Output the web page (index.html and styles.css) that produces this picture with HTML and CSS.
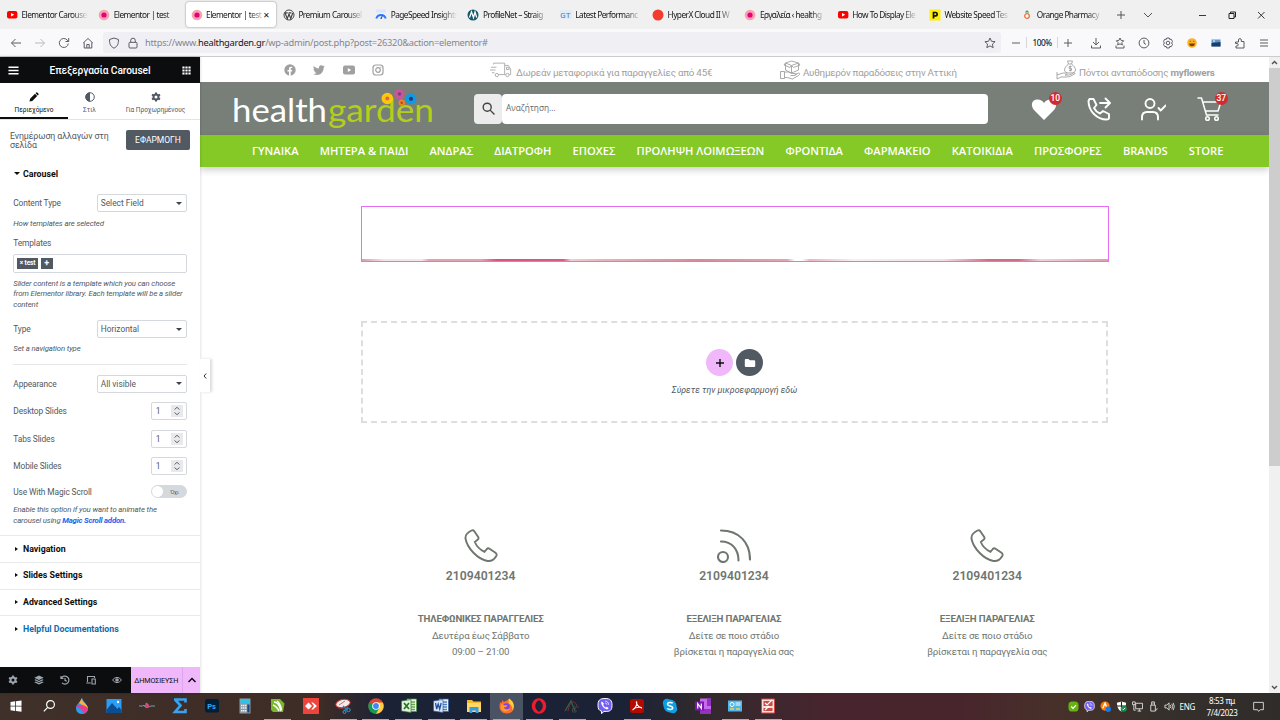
FILE: index.html
```
<!DOCTYPE html>
<html lang="el">

<head>
    <meta charset="UTF-8">
    <meta name="viewport" content="width=device-width, initial-scale=1.0">
    <title>Elementor | test</title>
    <link rel="stylesheet" href="styles.css">
</head>

<body>
    <!-- shared icons -->
    <svg class="defs">
        <symbol id="yt" viewBox="0 0 12 12"><rect x="1" y="2" width="10.4" height="7.6" rx="2" fill="#f00"/><path d="M5 4l3.2 1.8L5 7.6z" fill="#fff"/></symbol>
        <symbol id="el" viewBox="0 0 12 12"><circle cx="6" cy="6" r="5.3" fill="#f7a3ae"/><circle cx="6" cy="6" r="2.6" fill="#e5007e"/></symbol>
        <symbol id="phone" viewBox="0 0 34 34"><path d="M7.500 1.500C3.500 3.500 1 6 1.500 9.500C3 19 14 30.500 23.500 32C27.500 32.500 30.500 30 32.300 27C33 25.500 32.500 24.500 31.500 23.800L25.500 19.700C24.500 19 23.500 19.200 22.800 20L20.500 22.800C16.500 21 12.500 17 10.800 13L13.800 10.600C14.500 10 14.700 9 14.200 8L10.300 2.200C9.600 1.200 8.500 1 7.500 1.500Z" fill="none" stroke="#6f766f" stroke-width="1.900"/></symbol>
        <symbol id="viber" viewBox="0 0 16 16"><path d="M8 .5C2.500.5 1 2.500 1 7.300c0 3.700 1 5.200 3.500 5.800v2.600l2.500-2.300C13.300 13.700 15 12.500 15 7.300 15 2.500 13.500.5 8 .5z" fill="#7360f2" stroke="#fff" stroke-width="1"/><path d="M5 3.500c-1 .5-1 1.500-.5 2.700 1 2.400 2.800 4.300 5 5 1 .2 1.700-.3 2-1.200L9.700 8.700l-.9.8C7.500 9 6.700 8 6.200 6.700l.8-.9z" fill="#fff"/><path d="M8.200 3.200c2 0 3.300 1.300 3.400 3.500M8.300 5c1 .1 1.500.7 1.600 1.600" fill="none" stroke="#fff" stroke-width=".8"/></symbol>
    </svg>

    <!-- browser tabs -->
    <div class="tabbar">
        <div class="tab"><svg><use href="#yt"/></svg><span>Elementor Carousel</span></div>
        <div class="tab"><svg><use href="#el"/></svg><span>Elementor | test</span></div>
        <div class="tab active"><svg><use href="#el"/></svg><span>Elementor | test</span><i>✕</i></div>
        <div class="tab"><svg viewBox="0 0 12 12"><circle cx="6" cy="6" r="5" fill="#fff" stroke="#464342"/><path d="M2 3.800l2.300 6L6 5l1.800 4.800L9.700 4M1.800 3.800h3M5.500 3.800h3" fill="none" stroke="#464342" stroke-width="1.200"/></svg><span>Premium Carousel</span></div>
        <div class="tab"><svg viewBox="0 0 12 12"><path d="M1 .5h10v3H1z" fill="#d6e6ff"/><path d="M1.300 9.500a4.900 4.900 0 019.400 0" fill="none" stroke="#2979ff" stroke-width="2"/><path d="M5 9.500L8 5.500 6.800 10z" fill="#1a56c9"/></svg><span>PageSpeed Insights</span></div>
        <div class="tab"><svg viewBox="0 0 12 12"><circle cx="6" cy="6" r="5.500" fill="#15576b"/><path d="M2.500 8.500L4.500 3l2 5.500L8 3l1.700 5.500" fill="none" stroke="#fff" stroke-width="1.300"/></svg><span>ProfileNet – Straig</span></div>
        <div class="tab"><svg viewBox="0 0 12 12"><path d="M0 1h12v9H0z" fill="#e3ecf5"/><text x="0.300" y="8.500" class="gt">GT</text></svg><span>Latest Performanc</span></div>
        <div class="tab"><svg viewBox="0 0 12 12"><circle cx="6" cy="6" r="5.500" fill="#f23c2e"/></svg><span>HyperX Cloud II W</span></div>
        <div class="tab"><svg><use href="#el"/></svg><span>Εργαλεία ‹ healthg</span></div>
        <div class="tab"><svg><use href="#yt"/></svg><span>How To Display Ele</span></div>
        <div class="tab"><svg viewBox="0 0 12 12"><path d="M.5.500h11v11H.5z" fill="#ffef00"/><path d="M4.500 9.500V3.500h2a1.500 1.500 0 010 3.300h-2" fill="none" stroke="#111" stroke-width="1.700"/></svg><span>Website Speed Tes</span></div>
        <div class="tab"><svg viewBox="0 0 12 12"><circle cx="6" cy="7" r="2.300" fill="#fff" stroke="#f0703a" stroke-width="1.300"/><path d="M4.500 3.500L6 2l1.500 1.500" fill="none" stroke="#3d9a5b" stroke-width="1.200"/></svg><span>Orange Pharmacy</span></div>
        <div class="tab-tools">
            <svg viewBox="0 0 40 12"><path d="M6 2v8M2 6h8M29 4l4 4 4-4" fill="none" stroke="#55555d"/></svg>
        </div>
        <div class="win">
            <svg viewBox="0 0 70 12"><path d="M1 6.500h7M60 3l6.500 6.500M66.500 3L60 9.500" fill="none" stroke="#222" stroke-width=".9"/><path d="M31 4.500h5v5h-5zM32.500 4.500V3h5v5h-1.500" fill="none" stroke="#222"/></svg>
        </div>
    </div>

    <!-- address bar -->
    <div class="toolbar">
        <div class="nav-btns">
            <svg viewBox="0 0 12 12"><path d="M11 6H1.500M5.500 2L1.500 6l4 4" /></svg>
            <svg viewBox="0 0 12 12" class="off"><path d="M1 6h9.500M6.500 2l4 4-4 4"/></svg>
            <svg viewBox="0 0 12 12"><path d="M10.300 6.500a4.500 4.500 0 11-1.200-3.600L10.500 4.300M10.700 1v3.500H7.500"/></svg>
            <svg viewBox="0 0 12 12"><path d="M1.200 6L6 1.500 10.800 6M2.200 5.500V11h7.600V5.500M4.800 11V7.500h2.400V11"/></svg>
        </div>
        <div class="url">
            <svg viewBox="0 0 12 12"><path d="M6 1l4.500 1.500C10.500 7 9.500 9.500 6 11.200 2.500 9.500 1.500 7 1.500 2.500z"/></svg>
            <svg viewBox="0 0 12 12"><rect x="2" y="5.300" width="8" height="5.700" rx="1"/><path d="M3.700 5.300V3.500a2.300 2.300 0 014.600 0v1.800"/></svg>
            <p>https://www.<b>healthgarden.gr</b>/wp-admin/post.php?post=26320&amp;action=elementor#</p>
            <svg viewBox="0 0 12 12" class="star"><path d="M6 1l1.500 3.300 3.600.4L8.400 7.100l.8 3.600L6 8.900l-3.200 1.800.8-3.600L.9 4.700l3.600-.4z"/></svg>
        </div>
        <div class="zoom"><svg viewBox="0 0 12 12"><path d="M2 6h8"/></svg><em>100%</em><svg viewBox="0 0 12 12"><path d="M2 6h8M6 2v8"/></svg></div>
        <div class="ext">
            <svg viewBox="0 0 12 12"><path d="M6 1v7M3 5l3 3 3-3M1.500 8.500V11h9V8.500"/></svg>
            <svg viewBox="0 0 12 12"><path d="M6 1l1.200 2.500 2.500.3-1.800 1.800.4 2.400L6 6.800 3.700 8l.4-2.400L2.300 3.800l2.500-.3zM2 8.500V11h8V8.500"/></svg>
            <svg viewBox="0 0 12 12"><circle cx="6" cy="6" r="4.900"/><path d="M6 3v3.200l2 1.300"/></svg>
            <svg viewBox="0 0 12 12"><circle cx="6" cy="6" r="1.800"/><path d="M4.800 1h2.400l.5 1.400 1.500-.2 1.300 2.200L9.600 6l.9 1.500-1.300 2.200-1.500-.2L7.200 11H4.800l-.5-1.500-1.500.2-1.300-2.200L2.400 6l-.9-1.600 1.300-2.200 1.500.2z"/></svg>
            <svg viewBox="0 0 12 12"><circle cx="6" cy="6" r="4.800" fill="#fbb21e" stroke="none"/><path d="M3.200 6.500h5.600a2.800 2.800 0 01-5.600 0z" fill="#7b3b17" stroke="none"/><path d="M4.300 3.800v1M7.700 3.800v1"/></svg>
            <svg viewBox="0 0 12 12"><path d="M1.500 2.500h9v7h-9z" fill="#5b97d3" stroke="none"/><path d="M1.500 6l9-1v4.500h-9z" fill="#203a61" stroke="none"/><path d="M3 4h2" stroke="#fff"/></svg>
            <svg viewBox="0 0 12 12"><path d="M1.500 5h3V3a1.400 1.400 0 012.800 0v1.500H10V11H2V9h1a1.200 1.200 0 000-2.500H1.500z"/></svg>
            <svg viewBox="0 0 12 12"><path d="M2 3h8M2 6h8M2 9h8"/></svg>
        </div>
    </div>

    <div class="app">
        <!-- elementor panel -->
        <div class="panel">
            <div class="panel-head">
                <svg viewBox="0 0 12 12"><path d="M.5 2.500h11M.5 6h11M.5 9.500h11" stroke="#fff" stroke-width="1.600"/></svg>
                <h1>Επεξεργασία Carousel</h1>
                <svg viewBox="0 0 12 12"><path d="M1.500 2.700h9M1.500 6h9M1.500 9.300h9" stroke="#fff" stroke-width="2.300" stroke-dasharray="2.400 .9"/></svg>
            </div>
            <div class="panel-tabs">
                <div class="ptab on">
                    <svg viewBox="0 0 10 10"><path d="M.5 9.500l.6-2.800L6 1.800l2.200 2.200L3.300 9zM6.600 1.200l.7-.7q.5-.4 1 0l1.200 1.200q.4.500 0 1l-.7.700z" fill="#0c0d0e"/></svg>
                    <span>Περιεχόμενο</span>
                </div>
                <div class="ptab">
                    <svg viewBox="0 0 10 10"><circle cx="5" cy="5" r="4.300" fill="none" stroke="#515962"/><path d="M5 .5a4.500 4.500 0 000 9z" fill="#515962"/></svg>
                    <span>Στιλ</span>
                </div>
                <div class="ptab wide">
                    <svg viewBox="0 0 10 10"><circle cx="5" cy="5" r="2.500" fill="none" stroke="#515962" stroke-width="2"/><path d="M5 .4v2M5 7.600v2M1 2.700l1.700 1M7.300 6.300l1.700 1M1 7.300l1.700-1M7.300 3.700l1.700-1" stroke="#515962" stroke-width="2"/></svg>
                    <span>Για Προχωρημένους</span>
                </div>
            </div>
            <div class="notice">
                <p>Ενημέρωση αλλαγών στη σελίδα</p>
                <button>ΕΦΑΡΜΟΓΗ</button>
            </div>
            <h2 class="section open">Carousel</h2>
            <div class="controls">
                <div class="row first"><label>Content Type</label><div class="select">Select Field</div></div>
                <p class="desc">How templates are selected</p>
                <label class="lbl">Templates</label>
                <div class="tags"><span>× test</span><span class="plus">+</span></div>
                <p class="desc tpl">Slider content is a template which you can choose<br>from Elementor library. Each template will be a slider<br>content</p>
                <div class="row type"><label>Type</label><div class="select">Horizontal</div></div>
                <p class="desc">Set a navigation type</p>
                <hr>
                <div class="row"><label>Appearance</label><div class="select">All visible</div></div>
                <div class="row"><label>Desktop Slides</label><div class="num">1<svg viewBox="0 0 12 12"><path d="M3.500 4.500L6 2.300l2.500 2.200M3.500 7.500L6 9.700l2.500-2.200"/></svg></div></div>
                <div class="row"><label>Tabs Slides</label><div class="num">1<svg viewBox="0 0 12 12"><path d="M3.500 4.500L6 2.300l2.500 2.200M3.500 7.500L6 9.700l2.500-2.200"/></svg></div></div>
                <div class="row"><label>Mobile Slides</label><div class="num">1<svg viewBox="0 0 12 12"><path d="M3.500 4.500L6 2.300l2.500 2.200M3.500 7.500L6 9.700l2.500-2.200"/></svg></div></div>
                <div class="row magic"><label>Use With Magic Scroll</label><div class="switch"><b></b>Όχι</div></div>
                <p class="desc end">Enable this option if you want to animate the<br>carousel using <a>Magic Scroll addon.</a></p>
            </div>
            <h2 class="section">Navigation</h2>
            <h2 class="section">Slides Settings</h2>
            <h2 class="section">Advanced Settings</h2>
            <h2 class="section help">Helpful Documentations</h2>
            <div class="panel-foot">
                <svg viewBox="0 0 10 10"><circle cx="5" cy="5" r="2.500" fill="none" stroke="#9da5ae" stroke-width="2"/><path d="M5 .4v2M5 7.600v2M1 2.700l1.700 1M7.300 6.300l1.700 1M1 7.300l1.700-1M7.300 3.700l1.700-1" stroke="#9da5ae" stroke-width="1.800"/></svg>
                <svg viewBox="0 0 10 10"><path d="M5 .5l4.700 2.200L5 5 .3 2.700zM.3 5l1.400-.7L5 5.900l3.300-1.600 1.400.7L5 7.300zM.3 7.200l1.400-.7L5 8.100l3.300-1.600 1.400.7L5 9.500z" fill="#9da5ae"/></svg>
                <svg viewBox="0 0 10 10"><path d="M1 1v2.500h2.500M1.300 3.300A4 4 0 112 7.800M5 3v2.300l1.700 1" fill="none" stroke="#9da5ae" stroke-width="1.200"/></svg>
                <svg viewBox="0 0 10 10"><path d="M1.500 7V1.500h7V3M.3 8h4.500M6 4h3.300v5H6z" fill="none" stroke="#9da5ae" stroke-width="1.100"/></svg>
                <svg viewBox="0 0 10 10"><path d="M.5 5Q5-.3 9.500 5 5 10.300.5 5z" fill="none" stroke="#9da5ae"/><circle cx="5" cy="5" r="1.800" fill="#9da5ae"/></svg>
                <span class="publish">ΔΗΜΟΣΙΕΥΣΗ</span>
                <span class="up"><svg viewBox="0 0 10 10"><path d="M1.500 7L5 3.500 8.500 7" fill="none" stroke="#0c0d0e" stroke-width="1.500"/></svg></span>
            </div>
            <div class="collapse"><svg viewBox="0 0 6 8"><path d="M4.200 1.500L2 4l2.200 2.500" fill="none" stroke="#333"/></svg></div>
        </div>

        <!-- site preview -->
        <div class="site">
            <div class="top">
                <div class="social">
                    <svg viewBox="0 0 12 12"><circle cx="6" cy="6" r="5.700" fill="#a0a0a0"/><path d="M5 12V7.500H3.500V6H5V4.700C5 3.200 6 2.500 8.200 2.800V4C7 4 6.700 4.200 6.700 5v1H8.200L8 7.500H6.700V12z" fill="#fff"/></svg>
                    <svg viewBox="0 0 12 12"><path d="M11.800 2.500l-1.200 1.300C10.600 8.500 7.500 11 4 11 2.500 11 1.200 10.600.2 10c1.300.1 2.500-.2 3.400-1-1 0-1.900-.7-2.200-1.700h1C1.200 7 .5 6 .5 4.900l1 .3C.5 4.300.2 3 .8 1.900 2.100 3.400 3.800 4.300 5.900 4.500 5.500 2.500 6.700 1.200 8.300 1.200c.7 0 1.300.3 1.800.8l1.500-.6-1 1.300z" fill="#a0a0a0"/></svg>
                    <svg viewBox="0 0 12 12"><rect y="1.600" width="12" height="8.800" rx="2" fill="#a0a0a0"/><path d="M4.800 4l3.400 2-3.400 2z" fill="#fff"/></svg>
                    <svg viewBox="0 0 12 12" fill="none" stroke="#a0a0a0" stroke-width="1.200"><rect x="1" y="1" width="10" height="10" rx="2.700"/><circle cx="6" cy="6" r="2.300"/><path d="M8.500 3.300h.8"/></svg>
                </div>
                <div class="info one">
                    <svg viewBox="0 0 24 18"><path d="M4 3V1.500h12V14H9.500M16 4h4l2.500 4v6h-1.500M16 14h1M18 6h2l1 2.500h-3zM1 6h6M0 9h6M2 12h3"/><circle cx="7.500" cy="14.500" r="1.800"/><circle cx="19" cy="14.500" r="1.800"/></svg>
                    <span>Δωρεάν μεταφορικά για παραγγελίες από 45€</span>
                </div>
                <div class="info two">
                    <svg viewBox="0 0 21 20"><path d="M12 1l7 2v7l-7 3-6-3V3zM6 3l6 2.500L19 3M12 5.500V13M6 3L4.500 5l6 2.500L12 5.500l2 2L20.500 5 19 3M5 12h4l3 1.500h4c1 0 1 2-1 2h-4M15 15l4-2c1.500 0 1.500 1.500 0 2.500L13 19 8 17.500H5M1 11.500h4v7H1z"/></svg>
                    <span>Αυθημερόν παραδόσεις στην Αττική</span>
                </div>
                <div class="info three">
                    <svg viewBox="0 0 20 20"><path d="M11.500 1h5l-1 3h-3zM12.500 4C10 6 8.500 8 8.500 10s2 3 5.500 3 5.500-1 5.500-3S18 6 15.500 4M15.700 6.500h-2.500v2h2.300v2H13M14.300 5.500v6M1 12v7l4-2h5c3 0 6-1 9-3.500 0-1-1.500-1-2 0l-4 1.500H9c2 0 3-1.700 1.500-2H7L1 15"/></svg>
                    <span>Πόντοι ανταπόδοσης <b>myflowers</b></span>
                </div>
            </div>
            <div class="head">
                <svg class="logo" viewBox="0 0 204 44">
                    <text x="0" y="34" textLength="95" lengthAdjust="spacingAndGlyphs" fill="#fff">health</text>
                    <text x="96" y="34" textLength="106" lengthAdjust="spacingAndGlyphs" fill="#b3ce1b">garden</text>
                    <circle cx="155.300" cy="10.500" r="3.900" fill="#e9604e" stroke="#fdc70c" stroke-width="3.800"/>
                    <circle cx="167.500" cy="6" r="3.500" fill="#76407f" stroke="#cb5599" stroke-width="3.400"/>
                    <circle cx="179" cy="10.800" r="3.800" fill="#2b3580" stroke="#0c9ce3" stroke-width="3.400"/>
                    <circle cx="169.700" cy="14.700" r="2.200" fill="#a34c28" stroke="#f08224" stroke-width="2"/>
                </svg>
                <div class="search">
                    <div class="mag"><svg viewBox="0 0 12 12"><circle cx="4.800" cy="4.800" r="3.700"/><path d="M7.500 7.500l4 4"/></svg></div>
                    <div class="field">Αναζήτηση...</div>
                </div>
                <div class="actions">
                    <div class="act"><svg viewBox="0 0 26 26"><path d="M13 24L3 14C-1 9 1 3.500 6.500 3.500c3 0 5 1.500 6.500 3.500 1.500-2 3.500-3.500 6.500-3.500C25 3.500 27 9 23 14z" fill="#fff"/></svg><sup>10</sup></div>
                    <div class="act"><svg viewBox="0 0 26 26"><path d="M3.500 3h4l3 6-2.500 3c1.500 3 3.500 4.500 6 5.500l3-2.500 6 3v4c0 1.500-1 1.500-2.500 1.500C11 23.500 2.500 15 2.500 5zM14 7h9M19.500 2.500L24 7l-4.500 4.500" class="ln"/></svg></div>
                    <div class="act"><svg viewBox="0 0 26 26"><circle cx="10" cy="7.500" r="4.500" class="ln"/><path d="M2 23.500v-2c0-4 2-5.500 5-5.500h6c3 0 5 1.500 5 5.500v2M18.500 12l2.200 2.500 5-5" class="ln"/></svg></div>
                    <div class="act cart"><svg viewBox="0 0 26 26"><path d="M1 2h3.500L9.500 19H21M6 6h18l-3 9H8.500" class="ln"/><circle cx="10.500" cy="22.500" r="1.800" class="ln"/><circle cx="19.500" cy="22.500" r="1.800" class="ln"/></svg><sup>37</sup></div>
                </div>
            </div>
            <ul class="menu">
                <li>ΓΥΝΑΙΚΑ</li>
                <li>ΜΗΤΕΡΑ &amp; ΠΑΙΔΙ</li>
                <li>ΑΝΔΡΑΣ</li>
                <li>ΔΙΑΤΡΟΦΗ</li>
                <li>ΕΠΟΧΕΣ</li>
                <li>ΠΡΟΛΗΨΗ ΛΟΙΜΩΞΕΩΝ</li>
                <li>ΦΡΟΝΤΙΔΑ</li>
                <li>ΦΑΡΜΑΚΕΙΟ</li>
                <li>ΚΑΤΟΙΚΙΔΙΑ</li>
                <li>ΠΡΟΣΦΟΡΕΣ</li>
                <li>BRANDS</li>
                <li>STORE</li>
            </ul>
            <div class="widget"><div class="strip"></div></div>
            <div class="drop">
                <div class="btns">
                    <div class="round add"><svg viewBox="0 0 10 10"><path d="M5 1v8M1 5h8" stroke="#0c0d0e" stroke-width="1.400"/></svg></div>
                    <div class="round"><svg viewBox="0 0 12 12"><path d="M.8 3q0-1 1-1h2.700l1.300 1.300h4.400q1 0 1 1V9q0 1-1 1H1.800q-1 0-1-1z" fill="#fff"/></svg></div>
                </div>
                <p>Σύρετε την μικροεφαρμογή εδώ</p>
            </div>
            <div class="cols">
                <div class="col">
                    <svg><use href="#phone"/></svg>
                    <h3>2109401234</h3>
                    <p><b>ΤΗΛΕΦΩΝΙΚΕΣ ΠΑΡΑΓΓΕΛΙΕΣ</b><br>Δευτέρα έως Σάββατο<br>09:00 – 21:00</p>
                </div>
                <div class="col">
                    <svg viewBox="0 0 34 34"><g fill="none" stroke="#6f766f" stroke-width="2.100" stroke-linecap="round"><circle cx="6" cy="28" r="5"/><path d="M4 12.500c11 0 17.500 8 17.500 19M4 1.500c18 0 29 12 29 29"/></g></svg>
                    <h3>2109401234</h3>
                    <p><b>ΕΞΕΛΙΞΗ ΠΑΡΑΓΕΛΙΑΣ</b><br>Δείτε σε ποιο στάδιο<br>βρίσκεται η παραγγελία σας</p>
                </div>
                <div class="col">
                    <svg><use href="#phone"/></svg>
                    <h3>2109401234</h3>
                    <p><b>ΕΞΕΛΙΞΗ ΠΑΡΑΓΕΛΙΑΣ</b><br>Δείτε σε ποιο στάδιο<br>βρίσκεται η παραγγελία σας</p>
                </div>
            </div>
        </div>
        <div class="scroll">
            <svg viewBox="0 0 11 11"><path d="M3 7l2.500-2.500L8 7" fill="none" stroke="#505050" stroke-width="1.400"/></svg>
            <div class="thumb"></div>
            <svg viewBox="0 0 11 11"><path d="M3 4l2.500 2.500L8 4" fill="none" stroke="#505050" stroke-width="1.400"/></svg>
        </div>
    </div>

    <!-- windows taskbar -->
    <div class="taskbar">
        <div class="apps">
            <div><svg viewBox="0 0 16 16"><path d="M2.500 4l4.700-.7v4.400H2.500zM8 3.200l5.500-.8v5.300H8zM2.500 8.500h4.700v4.400l-4.700-.7zM8 8.500h5.500v5.300L8 13z" fill="#fff"/></svg></div>
            <div><svg viewBox="0 0 16 16"><circle cx="9.500" cy="6.500" r="3.900" fill="none" stroke="#fff" stroke-width="1.200"/><path d="M6.700 9.300L2.800 13.300" stroke="#fff" stroke-width="1.200"/></svg></div>
            <div><svg viewBox="0 0 16 16"><path d="M8 0C7 4 2 6 2 10.500a6 5.500 0 0012 0C14 7 10 5 8 0z" fill="#2d9cea"/><path d="M8 0c-.7 4 5.800 6 6 10.500L5 5z" fill="#fbb03b"/><path d="M3 7c3-1 8 0 11 3 0 3-2 5-4 5.500C9 12 6 10 2.500 9z" fill="#e43d8f"/></svg></div>
            <div><svg viewBox="0 0 16 16"><path d="M.5 1h15v14H.5z" fill="#2a9df4"/><path d="M.5 12L6 5l5.500 6L13 9l2.500 3v3H.5z" fill="#0b4d91"/><circle cx="12" cy="4" r="1.200" fill="#fff"/></svg></div>
            <div><svg viewBox="0 0 16 16"><path d="M0 8h4l1-1 1 2 2-2 2 2 2-1h4" fill="none" stroke="#6aa0a8"/><circle cx="8" cy="8" r="2.300" fill="#d8437f"/><path d="M6 6l2-1.500 1 2z" fill="#56a64b"/></svg></div>
            <div><svg viewBox="0 0 16 16"><path d="M2 1.500h11.500v3M3 1.500l5.500 6L3 14h10.500v-3" fill="none" stroke="#3aa2f2" stroke-width="2.600"/></svg></div>
            <div><svg viewBox="0 0 16 16"><rect x="1" y="1" width="14" height="13.500" rx="2.500" fill="#001e36"/><text x="3.200" y="10.700" class="ps">Ps</text></svg></div>
            <div><svg viewBox="0 0 16 16"><path d="M2.500.500h11v15h-11z" fill="#8d9ba5"/><path d="M3.500 1.500h9V5h-9z" fill="#30c3ea"/><path d="M4 7.500h5.500M4 10h5.500M4 12.700h5.500" stroke="#f0f0f0" stroke-width="1.600" stroke-dasharray="1.500 .5"/><path d="M10.300 6.500h2.200v8h-2.200z" fill="#174a83"/></svg></div>
            <div class="run"><svg viewBox="0 0 16 16"><path d="M1 1h9l4.500 4.500L13 14H3L1 12z" fill="#78b82a"/><path d="M4 4c4 0 6 5 7 9M3 7c3 1 5 4 6 6M7 3c3 2 4 6 4.500 9" fill="none" stroke="#fff" stroke-width="1.500"/></svg></div>
            <div><svg viewBox="0 0 16 16"><path d="M0 0h16v16H0z" fill="#ef443b"/><path d="M5.500 4.500L9 8l-3.500 3.500L2 8zM8.300 4.500L10 4.500 14 8l-4 3.500H8.300L11 8z" fill="#fff"/></svg></div>
            <div class="run"><svg viewBox="0 0 16 16"><ellipse cx="8" cy="5.500" rx="7.300" ry="4" fill="#eee" stroke="#c9332e" transform="rotate(-12 8 5.500)"/><path d="M4 7l6-4M3 10l6 1" stroke="#b33" stroke-width=".7"/><path d="M8 8l4 4M13 9l-4 4" stroke="#2c7bb8" stroke-width="1.200"/><circle cx="13.500" cy="12" r="1.700" fill="none" stroke="#2c9bd8"/><circle cx="9.500" cy="14" r="1.500" fill="none" stroke="#2c9bd8"/></svg></div>
            <div class="run"><svg viewBox="0 0 16 16"><circle cx="8" cy="8" r="7.700" fill="#db4437"/><path d="M1.300 4.200A7.700 7.700 0 008 15.700L11.400 10 8 8z" fill="#0f9d58"/><path d="M8 15.700A7.700 7.700 0 0014.800 4.400H8L11.400 10z" fill="#ffcd40"/><circle cx="8" cy="8" r="3.800" fill="#fff"/><circle cx="8" cy="8" r="2.900" fill="#4285f4"/></svg></div>
            <div class="run"><svg viewBox="0 0 16 16"><path d="M6 1h9.500v12.500H6z" fill="#eef5ea" stroke="#4b9a3d" stroke-width=".7"/><path d="M10 4h4M10 6.500h4M10 9h4M10 11.500h4" stroke="#66a74b" stroke-width="1.300"/><path d="M.5 3L10 1.500v13L.5 13z" fill="#e3f0dc" stroke="#2e7d32" stroke-width=".7"/><path d="M3 5l5 6M8 5l-5 6" stroke="#267326" stroke-width="1.700"/></svg></div>
            <div class="run"><svg viewBox="0 0 16 16"><path d="M6 1h9.500v12.500H6z" fill="#eef3fa" stroke="#2f5fa5" stroke-width=".7"/><path d="M10 4h4M10 6.500h4M10 9h4M10 11.500h4" stroke="#4d7fc0" stroke-width="1.300"/><path d="M.5 3L10 1.500v13L.5 13z" fill="#dde8f7" stroke="#2f5fa5" stroke-width=".7"/><path d="M2.500 5l1.200 6 1.500-5 1.500 5L8.200 5" fill="none" stroke="#204f9b" stroke-width="1.300"/></svg></div>
            <div class="run"><svg viewBox="0 0 16 16"><path d="M1 2h5l1.500 1.500H15V14H1z" fill="#f5b92e"/><path d="M1 5h14v9H1z" fill="#ffd868"/><path d="M3.500 9h9v6h-2.800v-2.500H6.300V15H3.500z" fill="#3d9be0"/></svg></div>
            <div class="run now"><svg viewBox="0 0 16 16"><path d="M3 2l2 2c1-1 2-1.500 3-1.500L10 .5l1.500 3L13 3c3 4 3 12-5 12.500C1 15.500-1 9 1.500 4L3 5z" fill="#ff6d2e"/><path d="M10 .5c5 3 6 8 3.500 12 0-3-1-6-4-7.500z" fill="#ffce3a"/><circle cx="7.500" cy="8.500" r="3.300" fill="#7f45d6"/><path d="M2 6l4 1.500L8.500 7 7 9.500 5 9C5 12 9 12 11 10c-1 4-6 5-9 1z" fill="#ff9a2e"/></svg></div>
            <div class="run"><svg viewBox="0 0 16 16"><ellipse cx="8" cy="8" rx="5.500" ry="6" fill="none" stroke="#ee1c2e" stroke-width="3.500"/><ellipse cx="8" cy="8" rx="3" ry="5.700" fill="#1e2336"/></svg></div>
            <div class="run"><svg viewBox="0 0 16 16"><path d="M1 13L7 3l4 10" fill="none" stroke="#35633f" stroke-width="1.300"/><path d="M4 13C5 5 10 0 13 8" fill="none" stroke="#7b3438"/><path d="M9 9h6M12 10.500H8.500V14H12v-2" fill="none" stroke="#41444c"/></svg></div>
            <div><svg><use href="#viber"/></svg></div>
            <div class="run"><svg viewBox="0 0 16 16"><rect x="1" y="1" width="14" height="14" rx="2.500" fill="#b30b00"/><path d="M3.500 12C6 11 8.500 6.500 7.700 4c-1-1 0 5 4.800 6 .5-1.300-6-1-8 1" fill="none" stroke="#fff" stroke-width="1.100"/></svg></div>
            <div><svg viewBox="0 0 16 16"><circle cx="5" cy="5" r="4.200" fill="#0e9fe0"/><circle cx="11" cy="11" r="4.200" fill="#0e9fe0"/><circle cx="8" cy="8" r="6.500" fill="#0e9fe0"/><path d="M10.700 5.300C9.500 4 5.500 4 5.500 6.200c0 2.300 5.200 1.200 5.200 3.500 0 2.200-4.200 2.300-5.400.7" fill="none" stroke="#fff" stroke-width="1.500"/></svg></div>
            <div><svg viewBox="0 0 16 16"><path d="M5 .5h11v15H5z" fill="#c66bec"/><path d="M12 .5h4V8h-4zM5 11h11v4.500H5z" fill="#9332bf"/><path d="M0 3.500h9v9H0z" fill="#7719aa"/><path d="M2.700 10.500v-5l3.600 5v-5" fill="none" stroke="#fff" stroke-width="1.200"/></svg></div>
            <div class="run"><svg viewBox="0 0 16 16"><path d="M1 2.500h14v11H1z" fill="#4db7ec"/><circle cx="5" cy="6.500" r="2" fill="none" stroke="#fff"/><path d="M8.500 5h5M8.500 7h5" stroke="#fff"/><path d="M3 11h4M9 11h4" stroke="#f7d04b" stroke-width="1.500"/></svg></div>
            <div class="run"><svg viewBox="0 0 16 16"><path d="M1.500 1h13v14h-13z" fill="#f7dedb" stroke="#c94b44"/><path d="M3.500 3h9v5h-9zM3.500 10h9v3h-9z" fill="#c94b44"/><path d="M5 5l2 2 5-5M5 12l4-4" stroke="#fff" stroke-width="1.200" fill="none"/></svg></div>
        </div>
        <div class="tray">
            <svg viewBox="0 0 12 12"><rect x=".5" y=".5" width="11" height="11" rx="4" fill="#65b313"/><path d="M3.500 6l2 2 3.300-3.500" fill="none" stroke="#fff" stroke-width="1.400"/></svg>
            <svg><use href="#viber"/></svg>
            <svg viewBox="0 0 12 12"><circle cx="5.500" cy="5.500" r="5" fill="#ff7800"/><path d="M3 8l2.500-5.500L7 6" fill="none" stroke="#fff" stroke-width="1.500"/><circle cx="9" cy="9" r="3" fill="#1677f0"/></svg>
            <svg viewBox="0 0 12 12"><path d="M6 .5l5 1.500C11 7 9.500 10 6 11.500 2.500 10 1 7 1 2z" fill="#fff"/><path d="M6 .5V11M1 5.500h10" stroke="#222" stroke-width="1.200"/><circle cx="8.500" cy="8.500" r="3.300" fill="#11914b"/><path d="M7 8.500l1 1 2-2" fill="none" stroke="#fff"/></svg>
            <svg viewBox="0 0 12 12" class="w"><path d="M4 2.500h7.500v6H4zM6 11h4M8 8.500V11M.5 1h3v3h-3zM2 4v6h2"/></svg>
            <svg viewBox="0 0 12 12" class="w"><path d="M3 4.500h5V11H3zM4 4.500V1h3v3.500M8 10c1.500 0 2-1 2-2M5 2.500h1"/></svg>
            <svg viewBox="0 0 12 12" class="w"><path d="M1 4.500h2L5.500 2v8L3 7.500H1zM7 4.500q1 1.500 0 3M8.500 3q2 3 0 6M10 2q2.500 4 0 8"/></svg>
            <span>ENG</span>
            <div class="clock">8:53 πμ<br>7/4/2023</div>
            <svg viewBox="0 0 12 12" class="w"><path d="M.7 1.500h10.600v8H8L6 11.300 5 9.500H.7z"/></svg>
        </div>
    </div>
</body>

</html>
```

FILE: styles.css
```
* {
    margin: 0;
    padding: 0;
    box-sizing: border-box;
}

body {
    width: 1280px;
    height: 720px;
    overflow: hidden;
    background-color: #fff;
    font-family: Roboto, "Liberation Sans", sans-serif;
}

svg {
    display: block;
    flex-shrink: 0;
}

.defs {
    display: none;
}
/* browser tabs */

.tabbar {
    display: flex;
    align-items: center;
    height: 29px;
    background-color: #f0f0f0;
    font-family: "Noto Sans", sans-serif;
    font-size: 8.3px;
    letter-spacing: -.55px;
    color: #15141a;
}

.tab {
    display: flex;
    align-items: center;
    flex-shrink: 0;
    width: 92.300px;
    height: 25px;
    padding-left: 6px;
}

.tab svg {
    width: 12px;
    height: 12px;
    margin-right: 3.500px;
}

.tab span {
    width: 68px;
    white-space: nowrap;
    mask-image: linear-gradient(to right, #000 50px, transparent 66px);
}

.tab.active {
    background-color: #fff;
    border-radius: 3px;
    box-shadow: 0 0 2px rgba(0, 0, 0, .5);
    width: 90px;
    margin: 0 1.300px 0 1px;
    padding-left: 5px;
}

.tab.active span {
    width: 56px;
    mask-image: linear-gradient(to right, #000 43px, transparent 60px);
}

.tab i {
    font-style: normal;
    font-size: 8px;
    margin-left: 1px;
}

.gt {
    font: 8px Roboto, sans-serif;
    letter-spacing: 0;
    fill: #3f7fc2;
}

.tab-tools svg {
    width: 40px;
    height: 12px;
    margin-left: 7px;
}

.win {
    margin-left: 43px;
}

.win svg {
    width: 70px;
    height: 12px;
}
/* address bar */

.toolbar {
    display: flex;
    align-items: center;
    height: 28px;
    background-color: #f9f9fb;
    border-bottom: 1px solid #ccccce;
}

.toolbar svg {
    width: 12px;
    height: 12px;
    fill: none;
    stroke: #5b5b66;
    stroke-width: 1;
}

.toolbar .off {
    opacity: .4;
}

.nav-btns {
    display: flex;
    gap: 12px;
    width: 103px;
    padding-left: 10px;
}

.url {
    display: flex;
    align-items: center;
    width: 898px;
    height: 21px;
    padding: 0 5px;
    gap: 7px;
    border-radius: 3px;
    background-color: #f0f0f4;
}

.url p {
    flex: 1;
    margin-left: -1px;
    font-family: "Noto Sans", sans-serif;
    font-size: 9.300px;
    letter-spacing: -.26px;
    color: #85858c;
}

.url b {
    font-weight: normal;
    color: #15141a;
}

.zoom {
    display: flex;
    align-items: center;
    gap: 4px;
    padding-left: 9px;
}

.zoom em {
    width: 32px;
    border: solid #d5d5da;
    border-width: 0 1px;
    font-family: "Noto Sans", sans-serif;
    font-style: normal;
    font-size: 8.3px;
    letter-spacing: -.5px;
    text-align: center;
}

.ext {
    display: flex;
    gap: 12px;
    margin-left: 16px;
}
/* panel + preview + scrollbar */

.app {
    display: flex;
    height: 636px;
}

.panel {
    position: relative;
    display: flex;
    flex-direction: column;
    width: 200px;
    color: #515962;
    font-size: 8.4px;
    box-shadow: 0 0 3px rgba(0, 0, 0, .2);
    z-index: 2;
    background-color: #fff;
}

.panel-head {
    display: flex;
    align-items: center;
    justify-content: space-between;
    height: 26px;
    padding: 0 8px;
    background-color: #0c0d0e;
    color: #fff;
}

.panel-head svg {
    width: 11px;
    height: 11px;
}

.panel-head h1 {
    font-size: 10.2px;
    font-weight: 500;
    letter-spacing: -.1px;
}

.panel-tabs {
    display: flex;
    height: 37px;
    border-bottom: 1px solid #e2e4e6;
    font-size: 6.500px;
}

.ptab {
    display: flex;
    flex-direction: column;
    align-items: center;
    gap: 4px;
    width: 43px;
    padding-top: 9px;
}

.ptab svg {
    width: 10px;
    height: 10px;
}

.ptab.on {
    width: 68px;
    border-bottom: 2px solid #0c0d0e;
    color: #0c0d0e;
}

.ptab.wide {
    width: 89px;
}

.notice {
    display: flex;
    justify-content: space-between;
    height: 41px;
    padding: 10px 10px 0;
    font-size: 8.800px;
    letter-spacing: -.1px;
    line-height: 8.500px;
}

.notice p {
    width: 108px;
    padding-top: 2px;
}

.notice button {
    width: 64px;
    height: 20px;
    border: 0;
    border-radius: 2px;
    background-color: #515962;
    color: #fff;
    font: 8.500px Roboto, sans-serif;
}

.section {
    display: flex;
    align-items: center;
    height: 26.670px;
    padding: 0 0 1px 15px;
    border-top: 1px solid #e8e9eb;
    font-size: 8.800px;
    color: #0c0d0e;
}

.section::before {
    content: "";
    border: 2.500px solid transparent;
    border-left: 3.500px solid #0c0d0e;
    margin-right: 3px;
}

.section.open {
    border-top: 0;
    padding-left: 14px;
}

.section.open::before {
    border: 3px solid transparent;
    border-top: 3.500px solid #0c0d0e;
    margin: 3px 3px 0 0;
}

.section.help {
    color: #0f6bab;
}

.controls {
    height: 347.800px;
    padding: 0 13.300px;
    letter-spacing: -.13px;
}

.row {
    display: flex;
    align-items: center;
    justify-content: space-between;
    height: 27.400px;
}

.row.first {
    height: 31px;
}

.row.type {
    height: 30px;
    margin-top: 4px;
}

.row.magic {
    height: 24px;
}

.select,
.num,
.tags {
    border: 1px solid #d5d8dc;
    border-radius: 2px;
}

.select {
    display: flex;
    align-items: center;
    justify-content: space-between;
    width: 90px;
    height: 18px;
    padding: 0 4px 0 3px;
    letter-spacing: 0;
}

.select::after {
    content: "";
    border: 3px solid transparent;
    border-top: 3.500px solid #3f444b;
    margin-top: 3px;
}

.desc {
    height: 10.400px;
    font-size: 7.800px;
    font-style: italic;
    letter-spacing: -.13px;
    line-height: 10.400px;
    white-space: nowrap;
}

.lbl {
    display: block;
    height: 14px;
    margin: 7px 0 4px;
    line-height: 14px;
}

.tags {
    display: flex;
    align-items: center;
    gap: 3px;
    height: 19px;
    padding-left: 3px;
}

.tags span {
    height: 11px;
    padding: 0 2.500px;
    background-color: #515962;
    color: #fff;
    font-size: 6.500px;
    font-weight: bold;
    line-height: 11px;
}

.tags .plus {
    font-size: 9px;
    padding: 0 3.500px;
}

.desc.tpl {
    height: 31.200px;
    margin-top: 6px;
}

.controls hr {
    height: 1px;
    margin: 9.500px 0 5px;
    border: 0;
    background-color: #e6e8ea;
}

.num {
    display: flex;
    align-items: center;
    justify-content: space-between;
    width: 36px;
    height: 18px;
    padding: 0 3px 0 4px;
}

.num svg {
    width: 12px;
    height: 12px;
    background-color: #e9e9ed;
    fill: none;
    stroke: #666;
}

.switch {
    display: flex;
    align-items: center;
    justify-content: space-between;
    width: 36px;
    height: 13px;
    padding: 0 7px 0 0;
    border: 1px solid #d5d8dc;
    border-radius: 7px;
    background-color: #d5d8dc;
    font-size: 5.500px;
}

.switch b {
    width: 11px;
    height: 11px;
    border-radius: 50%;
    background-color: #fff;
}

.desc.end {
    height: 21px;
    margin-top: 1.500px;
}

.desc a {
    color: #2563eb;
    font-weight: bold;
    letter-spacing: -.2px;
}

.panel-foot {
    display: flex;
    align-items: center;
    height: 26px;
    margin-top: auto;
    padding-left: 8px;
    gap: 16px;
    background-color: #0c0d0e;
}

.panel-foot svg {
    width: 10px;
    height: 10px;
}

.publish {
    width: 52px;
    height: 26px;
    margin-left: -7.500px;
    background-color: #f0b8fb;
    color: #0c0d0e;
    font-size: 7.200px;
    letter-spacing: -.1px;
    line-height: 27px;
    text-align: center;
}

.up {
    width: 18px;
    height: 26px;
    margin-left: -16px;
    padding: 8px 3.500px;
    border-left: 1px solid #e0a6ec;
    background-color: #f0b8fb;
}
/* handle sits over the preview */

.collapse {
    position: absolute;
    left: 200px;
    top: 302px;
    width: 10px;
    height: 33px;
    padding: 13px 2px;
    background-color: #fff;
    box-shadow: 2px 0 3px rgba(0, 0, 0, .15);
}

.collapse svg {
    width: 6px;
    height: 8px;
}
/* site */

.site {
    width: 1069px;
    overflow: hidden;
}

.top {
    display: flex;
    align-items: center;
    height: 25px;
    color: #a0a0a0;
    font-size: 9.800px;
    letter-spacing: -.23px;
}

.social {
    display: flex;
    gap: 17.500px;
    width: 290px;
    padding-left: 83.500px;
}

.social svg {
    width: 12px;
    height: 12px;
}

.info {
    display: flex;
    align-items: center;
    gap: 4px;
    white-space: nowrap;
}

.info svg {
    width: 22px;
    height: 20px;
    fill: none;
    stroke: #a0a0a0;
    stroke-width: .9;
}

.info span {
    padding-top: 5px;
}

.info.one {
    width: 289px;
}

.info.two {
    gap: 2px;
    width: 276px;
}

.info.three {
    gap: 2px;
}

.head {
    display: flex;
    align-items: center;
    height: 53px;
    padding-left: 32px;
    background-color: #777f78;
}

.logo {
    width: 204px;
    height: 44px;
    margin-top: 2px;
    overflow: visible;
}

.logo text {
    font-family: Lato, sans-serif;
    font-size: 32px;
}

.search {
    display: flex;
    width: 514px;
    height: 30px;
    margin-left: 38px;
}

.mag {
    width: 28px;
    padding: 8px;
    border-radius: 4px;
    background-color: #ececec;
}

.mag svg {
    width: 13px;
    height: 13px;
    fill: none;
    stroke: #444;
    stroke-width: 1.300;
}

.field {
    flex: 1;
    padding-left: 4px;
    border-radius: 4px;
    background-color: #fff;
    font: 8.300px/28px "Open Sans", sans-serif;
    color: #666;
}

.actions {
    display: flex;
    gap: 28.500px;
    margin-left: 43px;
}

.act {
    position: relative;
    width: 26px;
    height: 26px;
}

.act.cart {
    margin-left: 2.500px;
}

.act .ln {
    fill: none;
    stroke: #fff;
    stroke-width: 1.900;
    stroke-linecap: round;
    stroke-linejoin: round;
}

.act.cart .ln {
    stroke-width: 1.500;
}

.act sup {
    position: absolute;
    right: -5px;
    top: -4px;
    width: 13.500px;
    height: 13.500px;
    border-radius: 50%;
    background-color: #d32b2b;
    color: #fff;
    font: 500 8.500px/13.500px Roboto, sans-serif;
    text-align: center;
}

.menu {
    display: flex;
    align-items: center;
    justify-content: space-between;
    height: 32px;
    padding: 0 45.500px 2px 52px;
    background-color: #84c926;
    box-shadow: 0 3px 7px rgba(0, 0, 0, .2);
    list-style: none;
    color: #fff;
    font-family: "Open Sans", sans-serif;
    font-size: 11.150px;
    font-weight: 650;
    white-space: nowrap;
}

.widget {
    display: flex;
    align-items: flex-end;
    width: 748px;
    height: 56px;
    margin: 39px 0 0 160.500px;
    border: 1px solid #e86df5;
}

.strip {
    width: 100%;
    height: 2px;
    background: linear-gradient(to right, #d9a0ae, #f6e3e7 3%, #f6e6e9 8%, #dfa3b2 9%, #dfa3b2 16%, #d75480 18%, #d95a86 27%, #f0cdd5 28%, #e7b6c0 32%, #d48a9c 45%, #e0a6b3 57%, #fff 58%, #fff 59%, #e9b7c2 60%, #f9eef0 66%, #f3dfe3 78%, #cf6d88 84%, #cf6d88 88%, #f0d3da 91%, #dd9fae);
}

.drop {
    display: flex;
    flex-direction: column;
    align-items: center;
    width: 747px;
    height: 102px;
    margin: 59px 0 0 161px;
    padding-top: 26px;
    border: 2px dashed #dcdee0;
}

.btns {
    display: flex;
    gap: 3px;
}

.round {
    width: 27px;
    height: 27px;
    padding: 7.500px;
    border-radius: 50%;
    background-color: #515962;
}

.round svg {
    width: 12px;
    height: 12px;
}

.round.add {
    padding: 8.500px;
    background-color: #f0b8fb;
}

.round.add svg {
    width: 10px;
    height: 10px;
}

.drop p {
    margin-top: 9px;
    font-size: 8.800px;
    font-style: italic;
    color: #515962;
}

.cols {
    display: grid;
    grid-template-columns: repeat(3, 253.300px);
    margin: 106px 0 0 154px;
    color: #6f766f;
    text-align: center;
}

.col svg {
    width: 34px;
    height: 34px;
    margin: 0 auto;
}

.col h3 {
    height: 16px;
    margin-top: 5px;
    font-size: 12.200px;
    font-weight: 600;
    line-height: 16px;
}

.col p {
    margin-top: 27px;
    font-size: 9.700px;
    letter-spacing: -.15px;
    line-height: 16.600px;
}

.scroll {
    width: 11px;
    background-color: #f0f0f0;
    display: flex;
    flex-direction: column;
}

.scroll svg {
    width: 11px;
    height: 11px;
}

.thumb {
    height: 398px;
    margin-bottom: auto;
    background-color: #cdcdcd;
}
/* taskbar */

.taskbar {
    display: flex;
    justify-content: space-between;
    height: 27px;
    background: linear-gradient(to right, #40302a, #3e2c26 25%, #1c2236 30%, #1c2236 49%, #312a2c 55%, #48242f 65%, #48252c 75%, #47312a 83%, #36302c 90%, #2f2c2a);
}

.apps {
    display: flex;
}

.apps div {
    width: 32.700px;
    height: 27px;
    padding: 5px 8.350px;
}

.apps svg {
    width: 16px;
    height: 16px;
}

.apps .run {
    background: linear-gradient(#76b9ed, #76b9ed) center bottom / 27px 1.500px no-repeat;
}

.apps .now {
    background-color: #4a5364;
}

.ps {
    font: bold 7.500px Roboto, sans-serif;
    fill: #31a8ff;
}

.tray {
    display: flex;
    align-items: center;
    gap: 5px;
    padding-right: 16px;
    color: #fff;
    font-family: "Noto Sans", sans-serif;
    font-size: 8px;
    letter-spacing: -.3px;
}

.tray svg {
    width: 11px;
    height: 11px;
}

.tray .w {
    fill: none;
    stroke: #ddd;
    stroke-width: 1;
}

.clock {
    width: 38px;
    margin: 0 7px 0 3px;
    font-size: 8px;
    line-height: 11.500px;
    text-align: center;
}
```
